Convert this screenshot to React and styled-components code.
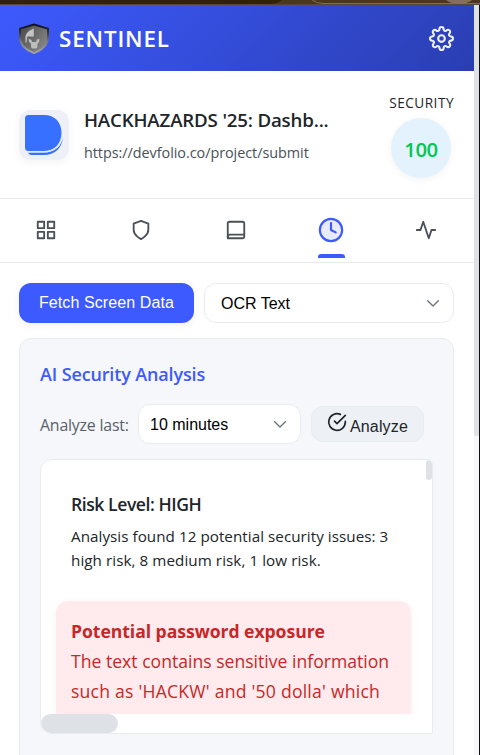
import React from "react";
import styled, { createGlobalStyle, css } from "styled-components";

const Global = createGlobalStyle`
  *, *::before, *::after { box-sizing: border-box; }
  html, body { margin: 0; height: 755px; overflow: hidden; background: #fff; }
  body { font-family: "Open Sans", "Noto Sans", sans-serif; color: #212529; }
  button { margin: 0; font-family: "Liberation Sans", Arial, sans-serif; cursor: pointer; }
`;

const Window = styled.div`
  display: flex;
  flex-direction: column;
  width: 480px;
  height: 755px;
  overflow: hidden;
`;

const BrowserStrip = styled.svg`
  display: block;
  flex: none;
`;

const Viewport = styled.div`
  display: grid;
  grid-template-columns: 474px 5px 1px;
  flex: 1;
  min-height: 0;
`;

const Page = styled.main`
  display: flex;
  flex-direction: column;
  min-height: 0;
  overflow: hidden;
  background: #fff;
`;

const PageTrack = styled.div`
  background: #f5f7fb;
`;

const PageThumb = styled.div`
  height: 431px;
  background: #dee2e6;
  border-radius: 0 0 3px 3px;
`;

const WindowEdge = styled.div`
  background: #101010;
`;

const Label = styled.span`
  display: block;
  white-space: nowrap;
  font-size: ${(p) => p.$size}px;
  line-height: ${(p) => p.$line}px;
  font-weight: ${(p) => p.$weight || 400};
  letter-spacing: ${(p) => p.$track || 0}px;
  color: ${(p) => p.$color || "#212529"};
`;

const Header = styled.header`
  display: flex;
  align-items: center;
  flex: none;
  height: 66px;
  padding: 1px 20px 0 18px;
  background: linear-gradient(135deg, #3d5afe 0%, #2a3eb1 100%);
`;

const Brand = styled.div`
  display: flex;
  align-items: center;
  gap: 9px;
  flex: 1;

  span { padding-top: 1px; }
`;

const Site = styled.section`
  display: flex;
  flex: none;
  height: 128px;
  padding: 0 20px 0 19px;
  border-bottom: 1px solid #e9ecef;
`;

const Favicon = styled.div`
  display: flex;
  flex: none;
  width: 50px;
  height: 50px;
  margin-top: 39px;
  border-radius: 12px;
  background: #edf1f7;
  box-shadow: 0 2px 8px rgba(0, 0, 0, 0.05);
`;

const SiteText = styled.div`
  flex: 1;
  margin: 36px 0 0 15px;
`;

const Score = styled.div`
  display: flex;
  flex-direction: column;
  align-items: flex-end;
  padding-top: 22px;
`;

const ScoreCircle = styled.div`
  display: flex;
  align-items: flex-start;
  justify-content: center;
  width: 60px;
  height: 60px;
  margin: 5px 3px 0 0;
  padding-top: 2px;
  border-radius: 50%;
  background: #e3f2fd;
  box-shadow: 0 2px 8px rgba(0, 0, 0, 0.05);
`;

const Tabs = styled.nav`
  display: grid;
  grid-template-columns: repeat(5, 95px);
  flex: none;
  height: 64px;
  margin-left: -1.500px;
  border-bottom: 1px solid #e9ecef;
`;

const Tab = styled.div`
  display: flex;
  flex-direction: column;
  align-items: center;
  padding-top: ${(p) => (p.$active ? 18 : 20)}px;
`;

const TabMarker = styled.div`
  width: 27px;
  height: 4px;
  margin: 11px 0 0 1px;
  border-radius: 3px 3px 0 0;
  background: #3d5afe;
`;

const Content = styled.section`
  display: flex;
  flex-direction: column;
  gap: 15px;
  padding: 20px 20px 0 19px;
`;

const Toolbar = styled.div`
  display: flex;
  gap: 10px;
`;

const FetchButton = styled.button`
  width: 175px;
  height: 40px;
  padding: 0;
  border: 0;
  border-radius: 12px;
  background: #3d5afe;
  color: #fff;
  font-size: 16px;
  letter-spacing: 0.1px;
  box-shadow: 0 2px 8px rgba(0, 0, 0, 0.06);
`;

const SelectBox = styled.button`
  display: flex;
  align-items: center;
  justify-content: space-between;
  width: ${(p) => p.$width}px;
  height: 40px;
  padding: 0 12px 0 ${(p) => p.$inset}px;
  border: 1px solid #e9ecef;
  border-radius: 12px;
  background: #fff;
  color: #000;
  font-size: 16px;

  span { padding-top: ${(p) => p.$drop || 0}px; }
`;

const Card = styled.section`
  height: 500px;
  padding: 22px 20px 0;
  border: 1px solid #e9ecef;
  border-radius: 12px;
  background: #f5f7fb;
`;

const AnalyzeRow = styled.div`
  display: flex;
  align-items: center;
  height: 40px;
  margin: 16px 0 15px;
`;

const LastLabel = styled.div`
  width: 98px;
  padding-top: 2px;
`;

const AnalyzeButton = styled.button`
  display: flex;
  align-items: center;
  gap: 3px;
  width: 113px;
  height: 36px;
  margin-left: 10px;
  padding: 0 0 0 15px;
  border: 1px solid #e9ecef;
  border-radius: 12px;
  background: #edf0f5;
  color: #212529;
  font-size: 16px;
  letter-spacing: 0.15px;

  svg { margin-bottom: 5px; }
  span { padding-top: 5px; }
`;

const Results = styled.div`
  position: relative;
  width: 393px;
  height: 275px;
  overflow: hidden;
  border: 1px solid #e9ecef;
  border-radius: 12px 6px 2px 12px;
  background: #fff;
`;

const ResultsBody = styled.div`
  height: 254px;
  overflow: hidden;
  padding: 30px 21px 0 15px;
`;

const Summary = styled.div`
  height: 111px;
  padding: 2px 0 0 15px;
`;

const Alert = styled.article`
  height: 160px;
  padding: 15px 0 0 15px;
  border-radius: 12px;
  background: #ffebee;
  box-shadow: 0 2px 8px rgba(0, 0, 0, 0.05);
`;

const Thumb = styled.div`
  position: absolute;
  background: #dee2e6;
  ${(p) =>
    p.$vertical
      ? css`top: 0; right: 0; width: 6px; height: 20px; border-radius: 3px;`
      : css`bottom: 0; left: 0; width: 77px; height: 19px; border-radius: 10px;`}
`;

function Icon({ size = 24, color = "#495057", fill = "none", weight = 2, children }) {
  return (
    <svg width={size} height={size} viewBox="0 0 24 24" fill={fill} stroke={color}
      strokeWidth={weight} strokeLinecap="round" strokeLinejoin="round" overflow="visible">
      {children}
    </svg>
  );
}

function ShieldLogo() {
  return (
    <svg width="32" height="32" viewBox="0 0 32 32">
      <defs>
        <linearGradient id="rim" x1="0" y1="0" x2="0" y2="1">
          <stop offset="0" stopColor="#080b12" />
          <stop offset="0.3" stopColor="#343638" />
          <stop offset="0.6" stopColor="#7d7d7d" />
          <stop offset="1" stopColor="#a8a8a8" />
        </linearGradient>
        <linearGradient id="face" x1="0" y1="0" x2="1" y2="0.7">
          <stop offset="0" stopColor="#4a4a4a" />
          <stop offset="1" stopColor="#858585" />
        </linearGradient>
      </defs>
      <path d="M16 .5 31 5v9c0 7.500-5 13.500-15 17C6 27.500 1 21.500 1 14V5Z" fill="url(#rim)" />
      <path d="M16 2.500 29 6.500V14c0 6.500-4.500 11.500-13 15C7.500 25.500 3 20.500 3 14V6.500Z" fill="url(#face)" />
      <path d="M7.500 19.500V13.500C8 10 11.500 7 15.800 5.500v8H9.300L8.500 19.500Z" fill="#c4c4c4" />
      <path d="M10.500 15.800l2.800 1 .8 2.200h4l.6-2.200 2.800-1-.5 3.500-1.300.8-.5 4.700-1.200.8h-3.500l-1.200-.8-.5-4.700-1.700-.8Z" fill="#bdbdbd" />
    </svg>
  );
}

function DevfolioLogo() {
  return (
    <svg width="50" height="50" viewBox="0 0 50 50">
      <path d="M9 42.500h16C36 42.500 43 35.500 43.800 27 43.500 38 35.500 45 25 45H13c-2 0-3.300-.8-4-2.500Z" fill="#3770ff" />
      <path d="M10 5h15C36 5 42.500 12.500 42.500 23S36 41 25 41H10c-3 0-4-1-4-4V9c0-3 1-4 4-4Z" fill="#3770ff" />
      <path d="M8 41.800h17c10 0 17-6 18-16" fill="none" stroke="#dfe8fb" strokeWidth="1.500" />
    </svg>
  );
}

function Chevron() {
  return (
    <Icon size={16} color="#6c757d" weight={2}><path d="m4 8.500 8 8 8-8" /></Icon>
  );
}

export default function App() {
  return (
    <Window>
      <Global />
      <BrowserStrip width="480" height="5" viewBox="0 0 480 5">
        <path d="M0 0h480v5H0Z" fill="#4b361f" />
        <path d="M0 0h282q-5 4-12 4H0Z" fill="#33200b" />
        <path d="M312 0q5 3.500 11 3.500h157" fill="none" stroke="#806d58" />
        <path d="M446 0h26q-5 4-13 4t-13-4Z" fill="#81705e" />
        <path d="M0 4.500h480" stroke="#55483c" />
      </BrowserStrip>
      <Viewport>
        <Page>
          <Header>
            <Brand>
              <ShieldLogo />
              <Label $size={22.4} $line={30} $weight={600} $track={0.85} $color="#fff">SENTINEL</Label>
            </Brand>
            <Icon size={25} color="#eef1ff" weight={2}>
              <circle cx="12" cy="12" r="3.200" />
              <path d="M19.400 15a1.650 1.650 0 0 0 .33 1.820l.06.06a2 2 0 0 1 0 2.830 2 2 0 0 1-2.830 0l-.06-.06a1.650 1.650 0 0 0-1.820-.33 1.650 1.650 0 0 0-1 1.510V21a2 2 0 0 1-2 2 2 2 0 0 1-2-2v-.09A1.650 1.650 0 0 0 9 19.400a1.650 1.650 0 0 0-1.820.33l-.06.06a2 2 0 0 1-2.830 0 2 2 0 0 1 0-2.830l.06-.06a1.650 1.650 0 0 0 .33-1.820 1.650 1.650 0 0 0-1.510-1H3a2 2 0 0 1-2-2 2 2 0 0 1 2-2h.09A1.650 1.650 0 0 0 4.600 9a1.650 1.650 0 0 0-.33-1.820l-.06-.06a2 2 0 0 1 0-2.830 2 2 0 0 1 2.830 0l.06.06a1.650 1.650 0 0 0 1.820.33H9a1.650 1.650 0 0 0 1-1.510V3a2 2 0 0 1 2-2 2 2 0 0 1 2 2v.09a1.650 1.650 0 0 0 1 1.510 1.650 1.650 0 0 0 1.820-.33l.06-.06a2 2 0 0 1 2.830 0 2 2 0 0 1 0 2.830l-.06.06a1.650 1.650 0 0 0-.33 1.820V9a1.650 1.650 0 0 0 1.510 1H21a2 2 0 0 1 2 2 2 2 0 0 1-2 2h-.09a1.650 1.650 0 0 0-1.510 1z" />
            </Icon>
          </Header>

          <Site>
            <Favicon><DevfolioLogo /></Favicon>
            <SiteText>
              <Label $size={18.7} $line={26} $weight={600} $track={-0.17}>HACKHAZARDS '25: Dashb...</Label>
              <Label $size={14.4} $line={40} $track={-0.04} $color="#495057">https://devfolio.co/project/submit</Label>
            </SiteText>
            <Score>
              <Label $size={13.6} $line={20} $weight={500} $track={0.5}>SECURITY</Label>
              <ScoreCircle>
                <Label $size={20.3} $line={59} $weight={600} $track={-0.4} $color="#00c853">100</Label>
              </ScoreCircle>
            </Score>
          </Site>

          <Tabs>
            <Tab>
              <Icon size={22}>
                <path d="M3 3h7v7H3zM14 3h7v7h-7zM14 14h7v7h-7zM3 14h7v7H3z" />
              </Icon>
            </Tab>
            <Tab>
              <Icon size={22}><path d="M12 22s8-4 8-10V5l-8-3-8 3v7c0 6 8 10 8 10z" /></Icon>
            </Tab>
            <Tab>
              <Icon size={22}>
                <path d="M3 19.500A2.500 2.500 0 0 1 5.500 17H21" />
                <path d="M5 3H19a2 2 0 0 1 2 2v14a2 2 0 0 1-2 2H3V5a2 2 0 0 1 2-2z" />
              </Icon>
            </Tab>
            <Tab $active>
              <Icon size={26} color="#3d5afe" fill="#e8ebff">
                <circle cx="12" cy="12" r="10.300" />
                <path d="M12 5.500V12l4.300 2.200" />
              </Icon>
              <TabMarker />
            </Tab>
            <Tab>
              <Icon size={22}><path d="M22 12h-4l-3 9L9 3l-3 9H2" /></Icon>
            </Tab>
          </Tabs>

          <Content>
            <Toolbar>
              <FetchButton>Fetch Screen Data</FetchButton>
              <SelectBox $width={250} $inset={16} $drop={2}><span>OCR Text</span><Chevron /></SelectBox>
            </Toolbar>
            <Card>
              <Label $size={18} $line={27} $weight={600} $track={-0.14} $color="#3d5afe">AI Security Analysis</Label>
              <AnalyzeRow>
                <LastLabel>
                  <Label $size={15.9} $line={24} $track={-0.2} $color="#5a6169">Analyze last:</Label>
                </LastLabel>
                <SelectBox $width={163} $inset={11} $drop={2}><span>10 minutes</span><Chevron /></SelectBox>
                <AnalyzeButton>
                  <Icon size={20} color="#212529">
                    <path d="M22 11.080V12a10 10 0 1 1-5.930-9.140" />
                    <path d="M22 4 12 14.010l-3-3" />
                  </Icon>
                  <span>Analyze</span>
                </AnalyzeButton>
              </AnalyzeRow>
              <Results>
                <ResultsBody>
                  <Summary>
                    <Label $size={17.6} $line={24} $weight={600} $track={-0.45}>Risk Level: HIGH</Label>
                    <Label $size={15.2} $line={40} $track={0.05}>Analysis found 12 potential security issues: 3</Label>
                    <Label $size={15.2} $line={8} $track={0.07}>high risk, 8 medium risk, 1 low risk.</Label>
                  </Summary>
                  <Alert>
                    <Label $size={17.6} $line={30} $weight={700} $track={-0.05} $color="#c62828">Potential password exposure</Label>
                    <Label $size={17.6} $line={30} $color="#c62828">The text contains sensitive information</Label>
                    <Label $size={17.6} $line={30} $track={0.22} $color="#c62828">such as 'HACKW' and '50 dolla' which</Label>
                  </Alert>
                </ResultsBody>
                <Thumb $vertical />
                <Thumb />
              </Results>
            </Card>
          </Content>
        </Page>
        <PageTrack><PageThumb /></PageTrack>
        <WindowEdge />
      </Viewport>
    </Window>
  );
}
